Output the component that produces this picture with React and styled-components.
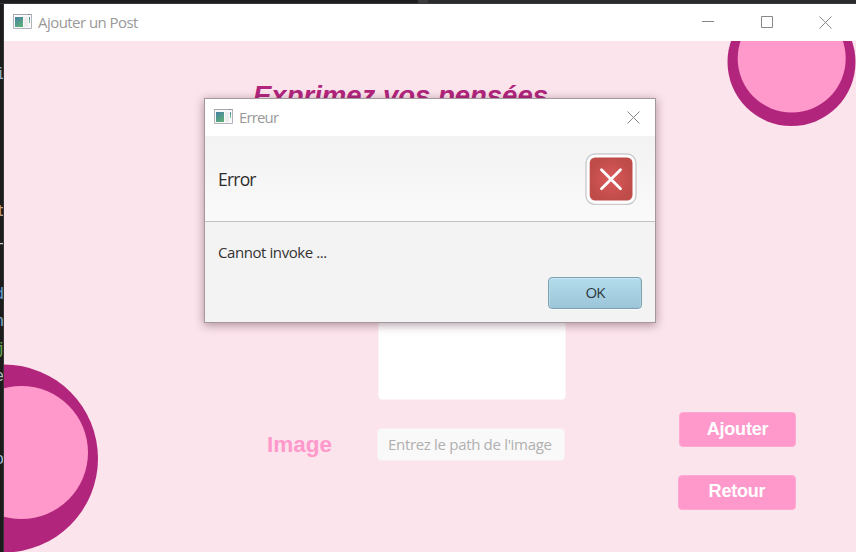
import React from 'react';
import styled, { createGlobalStyle } from 'styled-components';

const ui = '"Open Sans", "Noto Sans", sans-serif';
const arial = '"Liberation Sans", Arial, sans-serif';

const GlobalStyle = createGlobalStyle`
  * { box-sizing: border-box; }
  body { margin: 0; overflow: hidden; background: #1e1e1e; }
  button, input, textarea { font: inherit; margin: 0; }
`;

const Desktop = styled.div`
  position: relative;
  display: grid;
  grid-template: 4px 548px / 4px 852px;
  width: 856px;
  height: 552px;
  overflow: hidden;
  background: #1e1e1e;
`;

const EditorTop = styled.div`
  grid-column: 1 / -1;
  background: linear-gradient(90deg, #1e1e20 0 418px, #3c3c3e 418px 428px, #2a2b2d 428px);
  border-bottom: 1px solid #38393b;
`;

const EditorEdge = styled.div`
  position: relative;
  overflow: hidden;
  background: #1c1c1c;
  border-right: 1px solid #353538;
`;

const Glyph = styled.span`
  position: absolute;
  right: ${(p) => p.$right || 0}px;
  top: ${(p) => p.$top}px;
  font: 16px/20px "Liberation Mono", monospace;
  color: ${(p) => p.$color};
`;

const Window = styled.main`
  position: relative;
  overflow: hidden;
  background: #fbe4eb;
`;

const TitleBar = styled.header`
  display: flex;
  align-items: center;
  height: 37px;
  padding-left: 9px;
  background: #fff;
  position: relative;
`;

const Caption = styled.span`
  flex: 1;
  margin-left: 6px;
  padding-bottom: 2px;
  font: 15px/20px ${ui};
  letter-spacing: ${(p) => p.$track}px;
  color: #999;
`;

const Controls = styled.div`
  display: flex;
  gap: 46px;
  margin-right: ${(p) => p.$right}px;
  svg { display: block; }
`;

const Decor = styled.svg`
  position: absolute;
  inset: 0;
`;

const Page = styled.div`
  position: relative;
  display: grid;
  grid-template-columns: 562px 118px;
  column-gap: 112px;
  height: 511px;
`;

const Form = styled.section`
  display: grid;
  grid-template-columns: 111px 188px;
  grid-template-rows: 75px 232px 33px;
  row-gap: 28px;
  justify-content: end;
  padding-top: 24px;
`;

const Heading = styled.h1`
  grid-column: 1 / -1;
  margin: 13px 0 0 -14px;
  font: italic bold 27.5px/36px ${arial};
  color: #b2257d;
  white-space: nowrap;
`;

const Label = styled.label`
  padding-top: 1px;
  font: bold 22.5px/32px ${arial};
  color: #ff99cb;
`;

const TextArea = styled.textarea`
  grid-column: 2;
  width: 188px;
  height: 232px;
  resize: none;
  border: 1px solid #fdf3f6;
  border-radius: 4px;
  background: #fff;
`;

const Input = styled.input`
  width: 188px;
  height: 33px;
  margin-left: -1px;
  padding: 0 0 1px 10px;
  border: 1px solid #f9eef2;
  border-radius: 4px;
  background: #f9f9f9;
  font: 15px/20px ${ui};
  letter-spacing: -0.32px;
  &::placeholder { color: #b0b0b0; opacity: 1; }
`;

const Actions = styled.aside`
  display: flex;
  flex-direction: column;
  align-items: flex-end;
  gap: 28px;
  padding-top: 371px;
`;

const PinkButton = styled.button`
  width: ${(p) => p.$width}px;
  height: 35px;
  padding: 0 0 ${(p) => p.$lift || 0}px;
  border: 1px solid #ffa8d3;
  border-radius: 4px;
  background: #ff99cb;
  color: #fff;
  font: bold 18px/31px ${arial};
  letter-spacing: -0.2px;
`;

const Dialog = styled.div`
  position: absolute;
  left: 204px;
  top: 98px;
  width: 452px;
  height: 225px;
  border: 1px solid #a4989d;
  background: #f3f3f3;
  box-shadow: 0 2px 9px rgba(60, 20, 40, 0.42);
`;

const DialogHeader = styled.div`
  display: flex;
  align-items: center;
  justify-content: space-between;
  height: 86px;
  padding: 1px 18px 0 13px;
  background: linear-gradient(#f2f2f2, #fafafa);
  border-bottom: 1px solid #c3c3c3;
  font: 17.5px/24px ${ui};
  letter-spacing: -0.8px;
  color: #2d2d2d;
`;

const DialogBody = styled.div`
  display: flex;
  flex-direction: column;
  height: 100px;
  padding: 19px 13px 13px;
  font: 15px/22px ${ui};
  letter-spacing: -0.42px;
  color: #333;
`;

const OkButton = styled.button`
  align-self: flex-end;
  margin-top: auto;
  width: 94px;
  height: 32px;
  padding: 0 0 2px;
  border: 1px solid #7ba2b3;
  border-radius: 4px;
  background: linear-gradient(#b3dcec, #9cc5d9);
  box-shadow: inset 0 1px #c9e5f1, inset 1px 0 #b9dae7, inset -1px 0 #b0d2e0, 0 1px #fafafa;
  letter-spacing: -0.9px;
  color: #2c3840;
`;

function AppIcon() {
  return (
    <svg width="19" height="17" viewBox="0 0 19 17">
      <defs>
        <linearGradient id="screen" x1="0" y1="0" x2=".5" y2="1">
          <stop stopColor="#4681a4" />
          <stop offset="1" stopColor="#5caa7d" />
        </linearGradient>
      </defs>
      <path d="M.5.5h18v14H.5z" fill="#f9f9fa" stroke="#b1b4bc" />
      <path d="M0 .5h19" stroke="#a3a7af" />
      <path d="M2 3h8v10H2z" fill="url(#screen)" />
      <path d="M11 3h4v10h-4z" fill="#ededed" />
      <path d="M16 3h1v3h-1z" fill="#4b8ba0" />
      <path d="M16 6h1v3h-1z" fill="#75b999" />
      <path d="M15 0h2v1h-2z" fill="#858d9e" />
    </svg>
  );
}

function CloseIcon() {
  return (
    <svg width="13" height="13" viewBox="0 0 13 13">
      <path d="M.5.5l12 12M12.5.5l-12 12" stroke="#888" strokeWidth="1" />
    </svg>
  );
}

function ErrorIcon() {
  return (
    <svg width="52" height="52" viewBox="0 0 52 52">
      <defs>
        <radialGradient id="red">
          <stop stopColor="#db5a5c" />
          <stop offset="1" stopColor="#bf4c49" />
        </radialGradient>
      </defs>
      <rect x="1" y="1" width="50" height="50.5" rx="9" fill="#fff" stroke="#cbcbce" strokeWidth="1.4" />
      <rect x="4.7" y="4.5" width="42.8" height="43" rx="5.5" fill="url(#red)" />
      <path d="M16.5 16.7l19 19M35.5 16.7l-19 19" stroke="#fff" strokeWidth="2.8" strokeLinecap="round" />
    </svg>
  );
}

const glyphs = [
  { text: 'i', top: 61, color: '#8fb3d0', right: -2 },
  { text: 't', top: 198, color: '#c9a47e', right: -3 },
  { text: '-', top: 230, color: '#ccc', right: -3 },
  { text: 'd', top: 281, color: '#659bd1', right: -1 },
  { text: 'n', top: 308, color: '#87a8c8', right: -1 },
  { text: 'j', top: 336, color: '#6aa84f', right: -2 },
  { text: 'e', top: 363, color: '#b9bcc0', right: -1 },
  { text: 'o', top: 446, color: '#a5bfd6', right: -1 },
];

export default function App() {
  return (
    <Desktop>
      <GlobalStyle />
      <EditorTop />
      <EditorEdge>
        {glyphs.map((g) => (
          <Glyph key={g.top} $top={g.top} $right={g.right} $color={g.color}>{g.text}</Glyph>
        ))}
      </EditorEdge>
      <Window>
        <Decor width="852" height="548" viewBox="4 4 852 548">
          <circle cx="791.5" cy="62" r="64" fill="#b2257d" />
          <circle cx="791.7" cy="58.5" r="54" fill="#ff99cb" />
          <circle cx="4" cy="458.5" r="94" fill="#b2257d" />
          <circle cx="21.5" cy="452.5" r="66.5" fill="#ff99cb" />
        </Decor>
        <TitleBar>
          <AppIcon />
          <Caption $track={-0.55}>Ajouter un Post</Caption>
          <Controls $right={24}>
            <svg width="13" height="13"><path d="M1 5.5h12" stroke="#888" /></svg>
            <svg width="13" height="13"><path d="M1.5.5h11v11h-11z" fill="none" stroke="#888" /></svg>
            <CloseIcon />
          </Controls>
        </TitleBar>
        <Page>
          <Form>
            <Heading>Exprimez vos pensées</Heading>
            <TextArea />
            <Label htmlFor="image">Image</Label>
            <Input id="image" placeholder="Entrez le path de l'image" />
          </Form>
          <Actions>
            <PinkButton $width={117}>Ajouter</PinkButton>
            <PinkButton $width={118} $lift={2}>Retour</PinkButton>
          </Actions>
        </Page>
      </Window>
      <Dialog role="alertdialog">
        <TitleBar>
          <AppIcon />
          <Caption $track={-0.85}>Erreur</Caption>
          <Controls $right={15}><CloseIcon /></Controls>
        </TitleBar>
        <DialogHeader>
          <span>Error</span>
          <ErrorIcon />
        </DialogHeader>
        <DialogBody>
          <span>Cannot invoke ...</span>
          <OkButton>OK</OkButton>
        </DialogBody>
      </Dialog>
    </Desktop>
  );
}
